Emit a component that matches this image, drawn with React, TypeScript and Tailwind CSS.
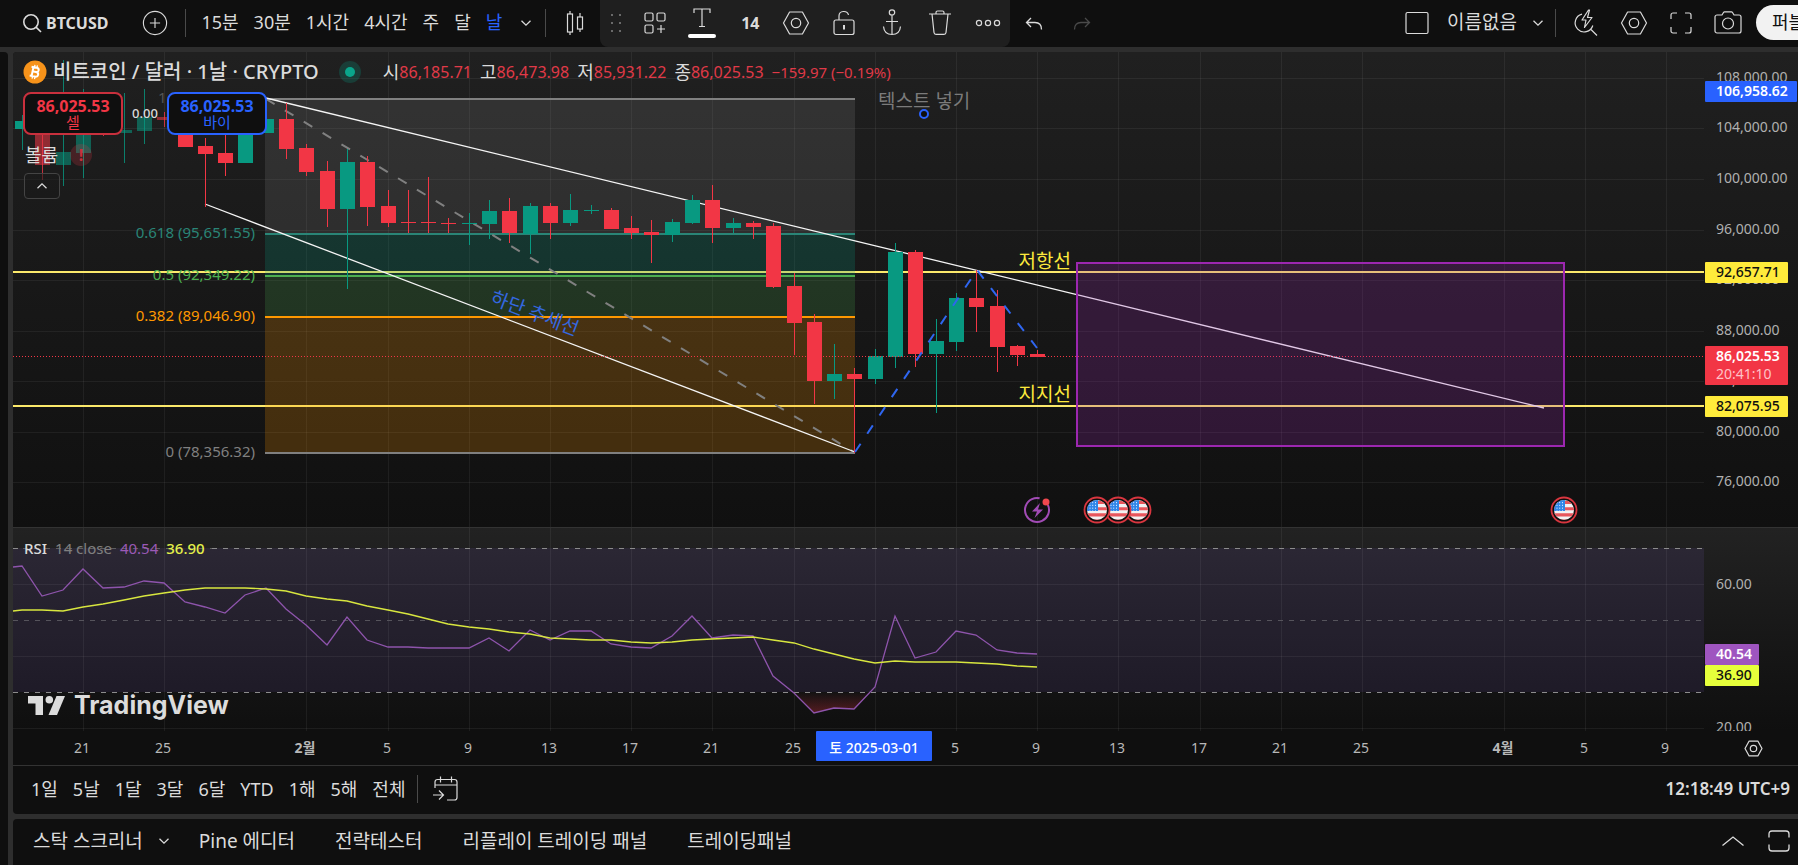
import { ReactNode } from 'react';

const UP = '#089981';
const DOWN = '#f23645';

// x of a daily bar, counted from January 21
const barX = (day: number) => Math.round(83 + day * 20.3);

// [day, high, low, body top, body bottom, rising]
type Candle = [number, number, number, number, number, boolean];

const candles: Candle[] = [
  [-3, 115, 150, 121, 129, true],
  [-2, 100, 180, 110, 165, false],
  [-1, 60, 186, 152, 165, true],
  [0, 89, 178, 125, 153, true],
  [1, 110, 136, 112, 134, false],
  [2, 93, 163, 130, 133, true],
  [3, 89, 144, 117, 131, true],
  [4, 112, 127, 117, 120, false],
  [5, 110, 147, 115, 147, false],
  [6, 138, 207, 146, 154, false],
  [7, 130, 176, 153, 163, false],
  [8, 120, 163, 125, 163, true],
  [9, 119, 133, 119, 133, true],
  [10, 103, 159, 119, 149, false],
  [11, 144, 176, 148, 172, false],
  [12, 161, 227, 171, 209, false],
  [13, 149, 289, 162, 209, true],
  [14, 156, 226, 162, 207, false],
  [15, 190, 227, 206, 223, false],
  [16, 190, 233, 222, 223, false],
  [17, 177, 233, 222, 223, false],
  [18, 218, 233, 223, 224, false],
  [19, 213, 245, 223, 224, true],
  [20, 200, 239, 211, 224, true],
  [21, 198, 243, 211, 233, false],
  [22, 203, 254, 206, 234, true],
  [23, 203, 239, 206, 223, false],
  [24, 194, 226, 210, 223, true],
  [25, 205, 214, 210, 211, true],
  [26, 208, 229, 210, 229, false],
  [27, 216, 239, 228, 233, false],
  [28, 220, 263, 232, 235, false],
  [29, 219, 242, 222, 235, true],
  [30, 195, 224, 200, 223, true],
  [31, 185, 243, 200, 228, false],
  [32, 218, 233, 223, 228, true],
  [33, 221, 239, 223, 227, false],
  [34, 223, 288, 226, 287, false],
  [35, 273, 355, 286, 323, false],
  [36, 314, 404, 322, 381, false],
  [37, 344, 399, 374, 381, true],
  [38, 368, 453, 374, 379, false],
  [39, 349, 384, 356, 379, true],
  [40, 243, 368, 252, 357, true],
  [41, 250, 367, 252, 354, false],
  [42, 319, 413, 341, 354, true],
  [43, 293, 351, 298, 342, true],
  [44, 270, 332, 298, 307, false],
  [45, 290, 372, 306, 347, false],
  [46, 345, 366, 346, 355, false],
  [47, 350, 357, 354, 357, false],
];

const rsi = [
  566, 596, 590, 569, 588, 587, 581, 583, 602, 607, 613, 595, 588, 609, 625, 645, 617, 640, 647, 647, 648, 648, 648,
  638, 651, 630, 640, 631, 631, 644, 647, 648, 636, 616, 638, 635, 636, 676, 693, 713, 708, 709, 687, 616, 658, 652,
  631, 635, 650, 653, 654,
];
const rsiAverage = [
  610, 610, 611, 607, 604, 600, 596, 593, 590, 588, 588, 588, 589, 591, 596, 599, 601, 606, 610, 614, 619, 624, 627,
  629, 632, 634, 638, 639, 640, 640, 642, 643, 642, 640, 639, 638, 637, 640, 643, 649, 654, 659, 663, 661, 662, 662,
  662, 663, 664, 666, 667,
];
const toPoints = (values: number[]) => values.map((y, i) => `${barX(i - 3)},${y}`).join(' ');

const timeTicks: { day: number; label: string; bold?: boolean }[] = [
  { day: 0, label: '21' },
  { day: 4, label: '25' },
  { day: 11, label: '2월', bold: true },
  { day: 15, label: '5' },
  { day: 19, label: '9' },
  { day: 23, label: '13' },
  { day: 27, label: '17' },
  { day: 31, label: '21' },
  { day: 35, label: '25' },
  { day: 39, label: '' },
  { day: 43, label: '5' },
  { day: 47, label: '9' },
  { day: 51, label: '13' },
  { day: 55, label: '17' },
  { day: 59, label: '21' },
  { day: 63, label: '25' },
  { day: 70, label: '4월', bold: true },
  { day: 74, label: '5' },
  { day: 78, label: '9' },
];

const priceTicks = [
  { y: 78, label: '108,000.00' },
  { y: 128, label: '104,000.00' },
  { y: 179, label: '100,000.00' },
  { y: 230, label: '96,000.00' },
  { y: 280, label: '92,000.00' },
  { y: 331, label: '88,000.00' },
  { y: 381, label: '84,000.00' },
  { y: 432, label: '80,000.00' },
  { y: 482, label: '76,000.00' },
];

const Icon = ({ size = 28, className = '', children }: { size?: number; className?: string; children: ReactNode }) => (
  <svg
    width={size}
    height={size}
    viewBox="0 0 28 28"
    fill="none"
    stroke="currentColor"
    strokeWidth="1.2"
    className={`shrink-0 ${className}`}
    aria-hidden="true"
  >
    {children}
  </svg>
);

const HexIcon = ({ size = 28, strokeWidth = 1.2 }: { size?: number; strokeWidth?: number }) => (
  <Icon size={size}>
    <g strokeWidth={strokeWidth}>
      <path d="M7.6 3 L20.4 3 L26.5 14 L20.4 25 L7.6 25 L1.5 14 Z" strokeLinejoin="round" />
      <circle cx="14" cy="14" r="4.7" />
    </g>
  </Icon>
);

const Chevron = ({ up = false }: { up?: boolean }) => (
  <svg width="10" height="6" viewBox="0 0 10 6" fill="none" stroke="currentColor" strokeWidth="1.3" aria-hidden="true">
    <path d={up ? 'M0.5 5.2 L5 0.9 L9.5 5.2' : 'M0.5 0.8 L5 5.1 L9.5 0.8'} />
  </svg>
);

const IconButton = ({ label, width, children }: { label: string; width: string; children: ReactNode }) => (
  <button type="button" aria-label={label} className={`flex h-full shrink-0 items-center justify-center ${width}`}>
    {children}
  </button>
);

const Divider = () => <div className="h-7 w-px shrink-0 bg-[#4a4a4a]" />;

const DrawingToolbar = () => (
  <div className="flex h-[47px] w-[410px] shrink-0 items-center rounded-b-lg bg-[#1f1f1f] pb-0.5 pl-1">
    <IconButton label="이동" width="w-6">
      <svg width="12" height="20" fill="#6a6a6a" aria-hidden="true">
        {[2, 10, 18].map((y) => (
          <g key={y}>
            <rect x="1" y={y - 1} width="2" height="2" />
            <rect x="9" y={y - 1} width="2" height="2" />
          </g>
        ))}
      </svg>
    </IconButton>
    <IconButton label="템플릿" width="w-[54px]">
      <Icon>
        <rect x="4" y="4" width="8" height="8" rx="1.5" />
        <rect x="16" y="4" width="8" height="8" rx="1.5" />
        <rect x="4" y="16" width="8" height="8" rx="1.5" />
        <path d="M20 16 V24 M16 20 H24" />
      </Icon>
    </IconButton>
    <button type="button" aria-label="텍스트 색상" className="flex w-10 shrink-0 flex-col items-center gap-1.5">
      <svg width="18" height="20" fill="none" stroke="currentColor" strokeWidth="1.2" aria-hidden="true">
        <path d="M1 5 V1 H17 V5 M9 1 V18.5 M6 18.5 H12" />
      </svg>
      <span className="h-1 w-7 rounded-full bg-white" />
    </button>
    <button type="button" className="w-14 shrink-0 text-base font-bold">
      14
    </button>
    <IconButton label="설정" width="w-9">
      <HexIcon />
    </IconButton>
    <IconButton label="잠금" width="w-[60px]">
      <Icon>
        <rect x="4" y="11" width="20" height="14.5" rx="2" />
        <path d="M9 11 V7 C9 1.2 17.5 1.2 18.5 6" />
        <path d="M14 16 V20.5" strokeWidth="2" />
      </Icon>
    </IconButton>
    <IconButton label="고정" width="w-9">
      <Icon>
        <circle cx="14" cy="3.5" r="2.7" />
        <path d="M14 6.5 V26 M8 12.5 H20 M5.5 17.5 C6 23 9.5 25.5 14 25.5 C18.5 25.5 22 23 22.5 17.5" />
      </Icon>
    </IconButton>
    <IconButton label="삭제" width="w-[60px]">
      <Icon>
        <path d="M3 5 H25 M10 5 V3.5 C10 2.5 10.5 2 11.5 2 H16.5 C17.5 2 18 2.5 18 3.5 V5 M6 5 L8 23.5 C8.1 24.7 8.8 25.3 10 25.3 H18 C19.2 25.3 19.9 24.7 20 23.5 L22 5" />
      </Icon>
    </IconButton>
    <IconButton label="더보기" width="w-9">
      <Icon>
        <circle cx="5" cy="14" r="2.6" />
        <circle cx="14" cy="14" r="2.6" />
        <circle cx="23" cy="14" r="2.6" />
      </Icon>
    </IconButton>
  </div>
);

const intervals = ['15분', '30분', '1시간', '4시간', '주', '달', '날'];

const Header = () => (
  <header className="flex h-[47px] shrink-0 items-center overflow-hidden whitespace-nowrap bg-[#0f0f0f] text-[18px]">
    <button type="button" className="mb-0.5 ml-[22px] flex shrink-0 items-center gap-1 text-base font-bold">
      <svg width="20" height="20" fill="none" stroke="currentColor" strokeWidth="1.6" aria-hidden="true">
        <circle cx="9" cy="9" r="7.2" />
        <path d="M14 14.2 L19 19" />
      </svg>
      BTCUSD
    </button>
    <button type="button" aria-label="심볼 추가" className="mb-0.5 ml-[34px] shrink-0">
      <Icon size={26}>
        <circle cx="14" cy="14" r="12.5" />
        <path d="M14 8.5 V19.5 M8.5 14 H19.5" />
      </Icon>
    </button>
    <div className="mb-0.5 ml-[17px] flex shrink-0 items-center gap-[15px]">
      <Divider />
      {intervals.map((name) => (
        <button key={name} type="button" className={name === '날' ? 'text-[#2962ff]' : ''}>
          {name}
        </button>
      ))}
      <button type="button" aria-label="봉 주기" className="px-1">
        <Chevron />
      </button>
    </div>
    <div className="mb-0.5 ml-2.5 flex shrink-0 items-center">
      <Divider />
    </div>
    <button type="button" aria-label="캔들" className="mb-0.5 ml-5 shrink-0">
      <svg width="18" height="26" fill="none" stroke="currentColor" strokeWidth="1.2" aria-hidden="true">
        <path d="M4 1 V4 M4 22 V25 M14 3 V7 M14 19 V22" />
        <rect x="1.5" y="4" width="5" height="18" />
        <rect x="11.5" y="7" width="5" height="12" />
      </svg>
    </button>
    <div className="ml-4 flex shrink-0 items-center">
      <DrawingToolbar />
      <IconButton label="되돌리기" width="w-12">
        <svg width="18" height="14" fill="none" stroke="currentColor" strokeWidth="1.3" aria-hidden="true">
          <path d="M6 1 L1.5 5.5 L6 10 M1.5 5.5 H10 C14 5.5 16.5 8 16.5 12.5" />
        </svg>
      </IconButton>
      <IconButton label="다시하기" width="w-12">
        <svg width="18" height="14" fill="none" stroke="#4a4a4a" strokeWidth="1.3" aria-hidden="true">
          <path d="M12 1 L16.5 5.5 L12 10 M16.5 5.5 H8 C4 5.5 1.5 8 1.5 12.5" />
        </svg>
      </IconButton>
    </div>
    <div className="ml-auto flex h-full shrink-0 items-center pb-0.5">
      <button type="button" aria-label="레이아웃" className="mr-[18px]">
        <svg width="24" height="24" fill="none" stroke="currentColor" strokeWidth="1.2" aria-hidden="true">
          <rect x="1" y="1.5" width="22" height="21" rx="1.5" />
        </svg>
      </button>
      <button type="button" className="flex items-center gap-4 text-[19px]">
        이름없음
        <Chevron />
      </button>
      <div className="ml-3">
        <Divider />
      </div>
      <IconButton label="빠른 검색" width="w-[58px]">
        <Icon>
          <path d="M11 5.2 A9 9 0 1 0 21.8 16.5 M19.5 20 L26 26.5" />
          <path d="M17.5 1 L11 11 H15 L13.5 18.5 L21 8.5 H16.5 L18.5 1 Z" strokeLinejoin="round" />
        </Icon>
      </IconButton>
      <IconButton label="차트 설정" width="w-10">
        <HexIcon />
      </IconButton>
      <IconButton label="전체화면" width="w-[54px]">
        <Icon>
          <path d="M4 10 V6 C4 5 5 4 6 4 H10 M18 4 H22 C23 4 24 5 24 6 V10 M24 18 V22 C24 23 23 24 22 24 H18 M10 24 H6 C5 24 4 23 4 22 V18" />
        </Icon>
      </IconButton>
      <IconButton label="스냅샷" width="w-10">
        <Icon>
          <path d="M3 6 H8 L9.5 3.5 C9.8 3 10 2.8 10.5 2.8 H17.5 C18 2.8 18.2 3 18.5 3.5 L20 6 H25 C26 6 27 7 27 8 V22 C27 23 26 24 25 24 H3 C2 24 1 23 1 22 V8 C1 7 2 6 3 6 Z" />
          <circle cx="14" cy="14.5" r="5.5" />
        </Icon>
      </IconButton>
      <button
        type="button"
        className="ml-2 h-[35px] w-[42px] overflow-hidden rounded-l-full bg-[#f2f2f2] pl-4 text-left text-[18px] text-[#0f0f0f]"
      >
        퍼블리쉬
      </button>
    </div>
  </header>
);

const UsFlag = ({ x }: { x: number }) => (
  <g transform={`translate(${x} 510)`}>
    <circle r="12.5" fill="#0f0f0f" stroke="#d9363f" strokeWidth="1.8" />
    <clipPath id={`flag-${x}`}>
      <circle r="10" />
    </clipPath>
    <g clipPath={`url(#flag-${x})`}>
      <rect x="-10" y="-10" width="20" height="20" fill="#f2f2f2" />
      <path d="M-10 -7.5 H10 M-10 -1.3 H10 M-10 4.9 H10 M-10 11 H10" stroke="#e8565c" strokeWidth="3.1" />
      <rect x="-10" y="-10" width="11" height="11" fill="#2f86e8" />
      <path
        d="M-7 -8 V1 M-4.3 -8 V1 M-1.5 -8 V1"
        stroke="#cfe3ff"
        strokeWidth="1"
        strokeDasharray="1.2 1.6"
      />
    </g>
  </g>
);

const fibLevels = [
  { y: 234, color: '#2a8577', label: '0.618 (95,651.55)' },
  { y: 276, color: '#4caf50', label: '0.5 (92,349.22)' },
  { y: 317, color: '#ff9800', label: '0.382 (89,046.90)' },
  { y: 453, color: '#808080', label: '0 (78,356.32)' },
];

const VerticalGrid = () => (
  <g stroke="#ffffff" strokeOpacity="0.06">
    {timeTicks.map(({ day }) => (
      <line key={day} x1={barX(day) + 0.5} x2={barX(day) + 0.5} y1="0" y2="2000" />
    ))}
  </g>
);

// All series are kept in window coordinates; the group shifts them into the pane.
const PricePlot = () => (
  <svg className="block h-full w-full">
    <g transform="translate(-13 -52)">
      <VerticalGrid />
      <g stroke="#ffffff" strokeOpacity="0.06">
        {priceTicks.map(({ y }) => (
          <line key={y} x1="13" x2="4000" y1={y + 0.5} y2={y + 0.5} />
        ))}
      </g>

      {/* Support and resistance */}
      <path d="M13 272 H4000 M13 406 H4000" stroke="#fbe96b" strokeWidth="2" />

      {/* Fibonacci retracement */}
      <rect x="265" y="99" width="590" height="135" fill="#808080" fillOpacity="0.2" />
      <rect x="265" y="234" width="590" height="42" fill="#089981" fillOpacity="0.22" />
      <rect x="265" y="276" width="590" height="41" fill="#4caf50" fillOpacity="0.2" />
      <rect x="265" y="317" width="590" height="136" fill="#ff9800" fillOpacity="0.21" />
      <line x1="265" x2="855" y1="99" y2="99" stroke="#808080" strokeWidth="2" />
      {fibLevels.map(({ y, color, label }) => (
        <g key={label}>
          <line x1="265" x2="855" y1={y} y2={y} stroke={color} strokeWidth="2" />
          <text x="255" y={y + 4} textAnchor="end" fill={color} fontSize="15">
            {label}
          </text>
        </g>
      ))}
      <text x="158" y="103" fill="#555555" fontSize="15">
        1
      </text>
      <line x1="266" y1="99" x2="854" y2="452" stroke="#808080" strokeWidth="2" strokeDasharray="10 12" />

      {/* Trend lines */}
      <line x1="266" y1="98" x2="1544" y2="408" stroke="#f5f5f5" strokeWidth="1.3" />
      <line x1="205" y1="204" x2="855" y2="452" stroke="#f5f5f5" strokeWidth="1.3" />

      {candles.map(([day, high, low, top, bottom, rising]) => {
        const color = rising ? UP : DOWN;
        const x = barX(day);
        return (
          <g key={day} fill={color}>
            <rect x={x} y={high} width="1" height={low - high} opacity={day < 5 ? 0.8 : 1} />
            <rect x={x - 7} y={top} width="15" height={bottom - top} opacity={day > -3 && day < 5 ? 0.55 : 1} />
          </g>
        );
      })}

      <path
        d="M855 452 L977 270 L1037 348"
        fill="none"
        stroke="#2f66f0"
        strokeWidth="2"
        strokeDasharray="10 12"
      />
      <line x1="13" x2="4000" y1="356.5" y2="356.5" stroke="#f23645" strokeDasharray="1 2" />

      <rect x="1077" y="263" width="487" height="183" fill="#9c27b0" fillOpacity="0.22" stroke="#9c27b0" strokeWidth="2" />

      <g fontSize="19">
        <text x="1071" y="268" textAnchor="end" fill="#fde93c">
          저항선
        </text>
        <text x="1071" y="401" textAnchor="end" fill="#fde93c">
          지지선
        </text>
        <text x="878" y="108" fill="#7b7b7b">
          텍스트 넣기
        </text>
        <text transform="translate(535 313) rotate(20.9)" y="7" textAnchor="middle" fill="#3468e0">
          하단 추세선
        </text>
      </g>
      <circle cx="924" cy="114" r="4" fill="#0f0f0f" stroke="#2962ff" strokeWidth="2" />

      {/* Event markers */}
      <circle
        cx="1037"
        cy="510"
        r="12"
        fill="none"
        stroke="#a14bb5"
        strokeWidth="2"
        strokeDasharray="64 11.4"
        transform="rotate(-25 1037 510)"
      />
      <path d="M1040 503 L1032 511.5 H1037 L1034.5 518 L1043 509.5 H1038 Z" fill="#a14bb5" />
      <circle cx="1046" cy="502" r="3.5" fill="#f0484e" />
      {[1138, 1118, 1097, 1564].map((x) => (
        <UsFlag key={x} x={x} />
      ))}
    </g>
  </svg>
);

const PriceTag = ({ y, width, fill, text, color }: { y: number; width: number; fill: string; text: string; color: string }) => (
  <g>
    <rect x="1705" y={y} width={width} height="21" rx="1" fill={fill} />
    <text x="1716" y={y + 15} fill={color} fontWeight={color === '#ffffff' ? 600 : 500}>
      {text}
    </text>
  </g>
);

const PriceAxis = () => (
  <svg className="block h-full w-[94px] shrink-0" fontSize="14">
    <g transform="translate(-1704 -52)">
      {priceTicks.map(({ y, label }) => (
        <text key={y} x="1716" y={y + 4} fill="#b0b0b0">
          {label}
        </text>
      ))}
      <PriceTag y={81} width={92} fill="#2962ff" text="106,958.62" color="#ffffff" />
      <PriceTag y={262} width={83} fill="#ffeb3b" text="92,657.71" color="#0f0f0f" />
      <rect x="1705" y="346" width="83" height="39" rx="1" fill="#f23645" />
      <text x="1716" y="361" fill="#ffffff" fontWeight="600">
        86,025.53
      </text>
      <text x="1716" y="379" fill="#ffc2c7">
        20:41:10
      </text>
      <PriceTag y={396} width={83} fill="#ffeb3b" text="82,075.95" color="#0f0f0f" />
    </g>
  </svg>
);

const ohlc = [
  ['시', '86,185.71'],
  ['고', '86,473.98'],
  ['저', '85,931.22'],
  ['종', '86,025.53'],
];

const ChartLegend = () => (
  <div className="absolute left-0 top-0 whitespace-nowrap pl-[10px] pt-1.5">
    <div className="flex h-7 items-center">
      <svg width="24" height="24" aria-hidden="true">
        <circle cx="12" cy="12" r="11.5" fill="#f7931a" />
        <g transform="rotate(12 12 12)" fill="none" stroke="#ffffff" strokeWidth="2">
          <path d="M9.5 7.5 V16.5 M7.5 7.5 H12.8 C16 7.5 16 11.8 12.8 11.8 H9.5 M12.8 11.8 C16.6 11.8 16.6 16.5 12.8 16.5 H7.5" />
          <path d="M10.5 5 V7.5 M13 5 V7.5 M10.5 16.5 V19 M13 16.5 V19" strokeWidth="1.3" />
        </g>
      </svg>
      <h1 className="ml-1.5 text-[20px] font-medium text-[#dbdbdb]">비트코인 / 달러 · 1날 · CRYPTO</h1>
      <span className="ml-5 flex size-[22px] items-center justify-center rounded-full bg-[#089981]/25">
        <span className="size-2.5 rounded-full bg-[#0aa58b]" />
      </span>
      <dl className="ml-[22px] flex items-center gap-2 text-[#e03a48]">
        {ohlc.map(([name, value]) => (
          <div key={name} className="flex items-center">
            <dt className="text-[18px] text-[#dbdbdb]">{name}</dt>
            <dd>{value}</dd>
          </div>
        ))}
        <dd className="text-[15px]">−159.97 (−0.19%)</dd>
      </dl>
    </div>

    <div className="mt-1.5 flex items-center">
      <button
        type="button"
        className="h-[43px] w-[100px] rounded-lg border-2 border-[#c9303d] bg-[#0f0f0f] leading-4 text-[#f23645]"
      >
        <span className="block font-bold">86,025.53</span>
        <span className="block text-[15px]">셀</span>
      </button>
      <span className="w-11 text-center text-[13px] font-medium">0.00</span>
      <button
        type="button"
        className="h-[43px] w-[100px] rounded-lg border-2 border-[#2962ff] bg-[#0f0f0f] leading-4 text-[#2962ff]"
      >
        <span className="block font-bold">86,025.53</span>
        <span className="block text-[15px]">바이</span>
      </button>
    </div>

    <div className="mt-2 flex h-6 items-center gap-3 pl-0.5">
      <span className="text-[18px]">볼륨</span>
      <span className="flex size-[22px] items-center justify-center rounded-full bg-[#f23645]/20 font-bold text-[#c9303d]">
        !
      </span>
    </div>
    <button
      type="button"
      aria-label="지표 접기"
      className="ml-px mt-1.5 flex h-[26px] w-9 items-center justify-center rounded border border-[#444444] bg-[#1a1a1a]/60"
    >
      <Chevron up />
    </button>
  </div>
);

const RsiPlot = () => (
  <svg className="block h-full w-full">
    <defs>
      <linearGradient id="oversold" x1="0" y1="0" x2="0" y2="1">
        <stop offset="0" stopColor="#f23645" stopOpacity="0" />
        <stop offset="1" stopColor="#f23645" stopOpacity="0.3" />
      </linearGradient>
    </defs>
    <g transform="translate(-13 -528)">
      <rect x="13" y="548" width="4000" height="144" fill="#7e57c2" fillOpacity="0.12" />
      <VerticalGrid />
      <path d="M13 584.5 H4000 M13 656.5 H4000 M13 728.5 H4000" stroke="#ffffff" strokeOpacity="0.06" />
      <path d="M13 548.5 H23 M212 548.5 H4000 M13 692.5 H4000" stroke="#8c8c8c" strokeDasharray="5 6" />
      <path d="M23 548.5 H212" stroke="#5e5e5e" strokeDasharray="5 6" />
      <path d="M13 620.5 H4000" stroke="#56545c" strokeDasharray="5 6" />
      <path d="M793 692 L814 713 L835 708 L855 709 L870 692 Z" fill="url(#oversold)" />
      <polyline points={`13,567 ${toPoints(rsi)}`} fill="none" stroke="#8e54ac" strokeWidth="1.3" />
      <polyline points={`13,611 ${toPoints(rsiAverage)}`} fill="none" stroke="#d8e63f" strokeWidth="1.3" />
    </g>
  </svg>
);

const RsiAxis = () => (
  <svg className="block h-full w-[94px] shrink-0" fontSize="14">
    <g transform="translate(-1704 -528)" fill="#b0b0b0">
      <text x="1716" y="589">
        60.00
      </text>
      <text x="1716" y="732">
        20.00
      </text>
      <PriceTag y={644} width={54} fill="#9f55c0" text="40.54" color="#ffffff" />
      <PriceTag y={665} width={54} fill="#e6ff3b" text="36.90" color="#0f0f0f" />
    </g>
  </svg>
);

const TimeAxis = () => (
  <div className="flex h-[34px] shrink-0">
    <svg className="block h-full min-w-0 flex-1 overflow-hidden" fontSize="14" textAnchor="middle">
      <g transform="translate(-13 -731)">
        {timeTicks.map(({ day, label, bold }) => (
          <text key={day} x={barX(day) - 1} y="753" fill="#b8b8b8" fontWeight={bold ? 700 : 400}>
            {label}
          </text>
        ))}
        <rect x="816" y="731" width="116" height="30" rx="1" fill="#2962ff" />
        <text x="874" y="753" fill="#ffffff" fontWeight="500">
          토 2025-03-01
        </text>
      </g>
    </svg>
    <div className="flex w-[94px] shrink-0 items-center pl-10">
      <button type="button" aria-label="축 설정">
        <HexIcon size={19} strokeWidth={1.8} />
      </button>
    </div>
  </div>
);

const TradingViewLogo = () => (
  <a
    href="#tradingview"
    className="absolute bottom-2 left-[15px] flex items-center gap-[9px] font-['Inter',sans-serif] text-[25px] font-bold leading-9 text-[#dcdcdc]"
  >
    <svg width="37" height="19" fill="currentColor" aria-hidden="true">
      <path d="M0 0 H15 V19 H7.5 V7.5 H0 Z" />
      <circle cx="21.3" cy="3.8" r="3.8" />
      <path d="M28.5 0 H37 L29 19 H20.5 Z" />
    </svg>
    TradingView
  </a>
);

const ranges = ['1일', '5날', '1달', '3달', '6달', 'YTD', '1해', '5해', '전체'];
const panels = ['Pine 에디터', '전략테스터', '리플레이 트레이딩 패널', '트레이딩패널'];

export default function App() {
  return (
    <div className="flex h-screen min-h-[600px] flex-col overflow-hidden bg-[#2e2e2e] font-['Noto_Sans','Noto_Sans_CJK_KR',sans-serif] text-[#dbdbdb]">
      <Header />
      <div className="mt-[5px] flex min-h-0 flex-1 gap-[5px]">
        <div className="w-2 shrink-0 rounded-tr bg-[#0f0f0f]" />
        <div className="flex min-w-0 flex-1 flex-col gap-[5px]">
          <main className="flex min-h-0 flex-1 flex-col overflow-hidden rounded-l bg-[#0f0f0f]">
            <section
              aria-label="가격 차트"
              className="relative flex min-h-0 flex-1 bg-linear-to-b from-[#202020] to-[#101010]"
            >
              <div className="min-w-0 flex-1">
                <PricePlot />
              </div>
              <PriceAxis />
              <ChartLegend />
            </section>
            <section
              aria-label="RSI"
              className="relative flex h-[204px] shrink-0 border-t border-[#333333] bg-linear-to-b from-[#222222] to-[#0f0f0f]"
            >
              <div className="min-w-0 flex-1">
                <RsiPlot />
              </div>
              <RsiAxis />
              <div className="absolute left-[11px] top-2 flex gap-2 text-[15px] leading-6">
                <span className="font-medium">RSI</span>
                <span className="text-[#808080]">14 close</span>
                <span className="text-[#9b59b6]">40.54</span>
                <span className="font-medium text-[#e3f04a]">36.90</span>
              </div>
              <TradingViewLogo />
            </section>
            <TimeAxis />
            <div className="flex h-[49px] shrink-0 items-center border-t border-[#333333] pb-0.5 pl-[18px] pr-2 text-[18px]">
              <div className="flex items-center gap-[15px]">
                {ranges.map((name) => (
                  <button key={name} type="button">
                    {name}
                  </button>
                ))}
              </div>
              <div className="ml-3">
                <Divider />
              </div>
              <button type="button" aria-label="날짜로 이동" className="ml-3.5">
                <Icon>
                  <path d="M3 13 V7 C3 5.5 4 4.5 5.5 4.5 H22.5 C24 4.5 25 5.5 25 7 V22.5 C25 24 24 25 22.5 25 H15 M3 10 H25 M8.5 1.5 V7.5 M19.5 1.5 V7.5" />
                  <path d="M1 20 H11 M7 15.5 L11.5 20 L7 24.5" />
                </Icon>
              </button>
              <button type="button" className="ml-auto text-[17px] font-semibold">
                12:18:49 UTC+9
              </button>
            </div>
          </main>
          <footer className="flex h-[46px] shrink-0 items-center rounded-tl bg-[#0f0f0f] pb-0.5 pl-5 pr-2 text-[19px]">
            <button type="button" className="mr-[30px] flex items-center gap-4">
              스탁 스크리너
              <Chevron />
            </button>
            <nav className="flex gap-10">
              {panels.map((name) => (
                <button key={name} type="button">
                  {name}
                </button>
              ))}
            </nav>
            <div className="ml-auto flex items-center gap-6">
              <button type="button" aria-label="패널 열기">
                <svg width="22" height="10" fill="none" stroke="currentColor" strokeWidth="1.3" aria-hidden="true">
                  <path d="M0.5 9.5 L11 1 L21.5 9.5" />
                </svg>
              </button>
              <button type="button" aria-label="패널 최대화">
                <svg width="22" height="22" fill="none" stroke="currentColor" strokeWidth="1.3" aria-hidden="true">
                  <path d="M1 7.5 V4 C1 2 2 1 4 1 H18 C20 1 21 2 21 4 V7.5 M1 14.5 V18 C1 20 2 21 4 21 H18 C20 21 21 20 21 18 V14.5" />
                </svg>
              </button>
            </div>
          </footer>
        </div>
      </div>
    </div>
  );
}
